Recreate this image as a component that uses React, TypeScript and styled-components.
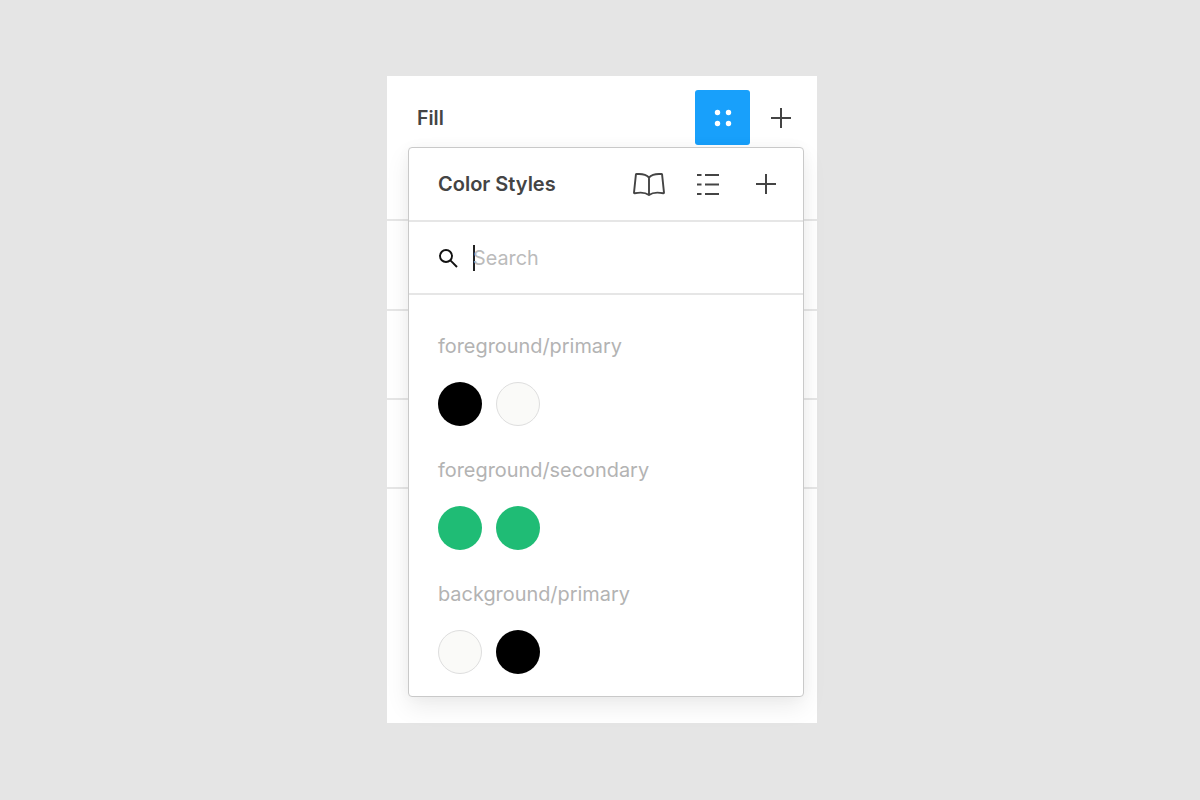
import React from "react";
import styled, { createGlobalStyle } from "styled-components";

const GlobalStyle = createGlobalStyle`
  html, body {
    margin: 0;
    padding: 0;
    background: #e5e5e5;
  }
  body {
    font-family: Inter, "Liberation Sans", sans-serif;
  }
`;

const Page = styled.div`
  width: 1200px;
  height: 800px;
  display: flex;
  justify-content: center;
  padding-top: 76px;
  box-sizing: border-box;
  overflow: hidden;
`;

const Sidebar = styled.div`
  position: relative;
  width: 430px;
  height: 647px;
  margin-left: 4px;
  background: #fff;
`;

const FillHeader = styled.div`
  height: 145px;
  display: flex;
  align-items: flex-start;
  padding: 14px 25px 0 30px;
  box-sizing: border-box;
  border-bottom: 2px solid #e6e6e6;
`;

const FillTitle = styled.div`
  flex: 1;
  font-size: 19.5px;
  font-weight: 600;
  line-height: 56px;
  color: #444;
`;

const StylesButton = styled.div`
  width: 55px;
  height: 55px;
  margin-right: 20px;
  border-radius: 3px;
  background: #18a0fb;
  display: flex;
  align-items: center;
  justify-content: center;
`;

const Section = styled.div`
  height: 89px;
  box-sizing: border-box;
  border-bottom: 2px solid #e6e6e6;
  &:nth-child(2) {
    height: 90px;
  }
`;

const IconSlot = styled.div`
  display: flex;
  align-items: center;
  justify-content: center;
  height: 55px;
`;

const Popover = styled.div`
  position: absolute;
  left: 21px;
  top: 71px;
  width: 396px;
  height: 550px;
  box-sizing: border-box;
  background: #fff;
  border: 1px solid #c9c9c9;
  border-radius: 4px;
  box-shadow: 0 10px 24px rgba(0, 0, 0, 0.08), 0 0 14px rgba(0, 0, 0, 0.03);
`;

const PopoverHeader = styled.div`
  height: 74px;
  box-sizing: border-box;
  border-bottom: 2px solid #e6e6e6;
  display: flex;
  align-items: center;
  padding: 0 26px 0 29px;
`;

const PopoverTitle = styled.div`
  flex: 1;
  font-size: 20px;
  font-weight: 600;
  color: #444;
`;

const HeaderIcons = styled.div`
  display: flex;
  align-items: center;
  gap: 32px;
`;

const ListSlot = styled.div`
  display: flex;
  margin-right: 4px;
`;

const SearchRow = styled.div`
  height: 73px;
  box-sizing: border-box;
  border-bottom: 2px solid #e6e6e6;
  display: flex;
  align-items: center;
  padding-left: 29px;
`;

const Caret = styled.div`
  width: 2px;
  height: 26px;
  margin-left: 15px;
  background: #222;
`;

const SearchText = styled.div`
  margin-left: -2px;
  font-size: 19.8px;
  color: #bbb;
`;

const Groups = styled.div`
  padding: 36px 29px 0;
`;

const Group = styled.div`
  margin-bottom: 29px;
`;

const GroupName = styled.div`
  font-size: 19.9px;
  line-height: 30px;
  color: #b3b3b3;
`;

const Swatches = styled.div`
  display: flex;
  gap: 14px;
  margin-top: 21px;
`;

const Swatch = styled.div<{ $color: string; $outlined?: boolean }>`
  width: 44px;
  height: 44px;
  box-sizing: border-box;
  border-radius: 50%;
  background: ${(p) => p.$color};
  border: ${(p) => (p.$outlined ? "1.5px solid #dedede" : "none")};
`;

const PlusIcon = () => (
  <svg width="22" height="22" viewBox="0 0 22 22" fill="none">
    <path d="M11 1V21M1 11H21" stroke="#444" strokeWidth="2" />
  </svg>
);

const DotsIcon = () => (
  <svg width="18" height="18" viewBox="0 0 18 18" fill="#fff">
    <circle cx="3.5" cy="3.5" r="2.7" />
    <circle cx="14.5" cy="3.5" r="2.7" />
    <circle cx="3.5" cy="14.5" r="2.7" />
    <circle cx="14.5" cy="14.5" r="2.7" />
  </svg>
);

const BookIcon = () => (
  <svg width="32" height="23" viewBox="0 0 32 23" fill="none">
    <path
      d="M16 4.5C14 2.3 10.5 1 6 1H3.6C3.2 1 3 1.2 2.9 1.6L1 19.6C1 20.1 1.2 20.4 1.7 20.3C8 19 12.5 19.4 16 22C19.5 19.4 24 19 30.3 20.3C30.8 20.4 31 20.1 31 19.6L29.1 1.6C29 1.2 28.8 1 28.4 1H26C21.5 1 18 2.3 16 4.5ZM16 4.5V22"
      stroke="#444"
      strokeWidth="1.9"
      strokeLinejoin="round"
    />
  </svg>
);

const ListIcon = () => (
  <svg width="22" height="21" viewBox="0 0 22 21" fill="none">
    <path
      d="M0 1H4.5M0 10.5H4.5M0 20H4.5M8 1H22M8 10.5H22M8 20H22"
      stroke="#444"
      strokeWidth="1.8"
    />
  </svg>
);

const SearchIcon = () => (
  <svg width="20" height="20" viewBox="0 0 20 20" fill="none">
    <circle cx="8" cy="8" r="6" stroke="#111" strokeWidth="1.9" />
    <path d="M12.4 12.4L19 19" stroke="#111" strokeWidth="1.9" />
  </svg>
);

const groups = [
  { name: "foreground/primary", swatches: ["#000000", "#fafaf8"] },
  { name: "foreground/secondary", swatches: ["#1fbc75", "#1fbc75"] },
  { name: "background/primary", swatches: ["#fafaf8", "#000000"] },
];

export default function App() {
  return (
    <>
      <GlobalStyle />
      <Page>
        <Sidebar>
          <FillHeader>
            <FillTitle>Fill</FillTitle>
            <StylesButton>
              <DotsIcon />
            </StylesButton>
            <IconSlot>
              <PlusIcon />
            </IconSlot>
          </FillHeader>
          <Section />
          <Section />
          <Section />
          <Popover>
            <PopoverHeader>
              <PopoverTitle>Color Styles</PopoverTitle>
              <HeaderIcons>
                <BookIcon />
                <ListSlot>
                  <ListIcon />
                </ListSlot>
                <PlusIcon />
              </HeaderIcons>
            </PopoverHeader>
            <SearchRow>
              <SearchIcon />
              <Caret />
              <SearchText>Search</SearchText>
            </SearchRow>
            <Groups>
              {groups.map((g) => (
                <Group key={g.name}>
                  <GroupName>{g.name}</GroupName>
                  <Swatches>
                    {g.swatches.map((c, i) => (
                      <Swatch key={i} $color={c} $outlined={c === "#fafaf8"} />
                    ))}
                  </Swatches>
                </Group>
              ))}
            </Groups>
          </Popover>
        </Sidebar>
      </Page>
    </>
  );
}
